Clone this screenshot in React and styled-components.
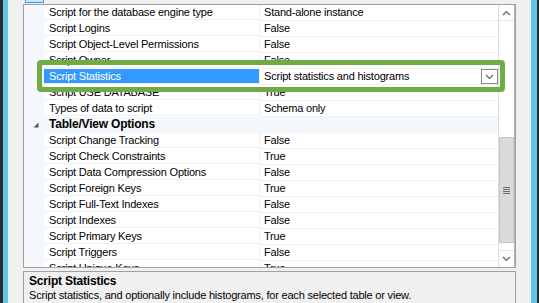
import React from 'react';
import styled, { createGlobalStyle } from 'styled-components';

const GlobalStyle = createGlobalStyle`
  html, body {
    margin: 0;
    padding: 0;
    background: #2b2b2b;
  }
  body {
    width: 539px;
    height: 303px;
    overflow: hidden;
    font-family: "Liberation Sans", Arial, sans-serif;
    font-size: 11px;
    letter-spacing: -0.2px;
    color: #000;
  }
`;

const Screen = styled.div`
  position: relative;
  display: flex;
  width: 539px;
  height: 303px;
  box-sizing: border-box;
  padding: 0 2px 0 3px;
  background: #2b2b2b;
  overflow: hidden;
`;

const Window = styled.div`
  flex: 1;
  min-width: 0;
  display: flex;
  flex-direction: column;
  border-left: 5px solid #5bc6e8;
  border-right: 6px solid #5bc6e8;
  background: #f0f0f0;
  padding: 0 15px;
`;

const Toolbar = styled.div`
  height: 4px;
  flex: none;
  display: flex;
  align-items: flex-end;
  padding-left: 2px;
  overflow: hidden;
`;

const ToolButton = styled.div`
  width: 17px;
  height: 22px;
  flex: none;
  margin-bottom: 1px;
  border: 1px solid #3399ff;
  background: #cce8ff;
`;

const Grid = styled.div`
  height: 264px;
  flex: none;
  box-sizing: border-box;
  border: 1px solid #a0a0a0;
  background: #fff;
  display: flex;
  overflow: hidden;
`;

const Rows = styled.div`
  flex: 1;
  min-width: 0;
  display: flex;
  flex-direction: column;
  overflow: hidden;
`;

const Row = styled.div`
  display: flex;
  height: 16px;
  flex: none;
  background: ${p => (p.$category ? '#f4f7fc' : '#fff')};
`;

const Gutter = styled.div`
  width: 20px;
  flex: none;
  display: flex;
  align-items: center;
  justify-content: center;
  padding-left: 3px;
  box-sizing: border-box;
  background: #f4f7fc;
`;

const NameCell = styled.div`
  width: 216px;
  flex: none;
  height: 15px;
  line-height: 15px;
  padding-left: 5px;
  box-sizing: border-box;
  border-right: 1px solid #f0f0f0;
  border-bottom: 1px solid #f0f0f0;
  background: ${p => (p.$selected ? '#3399ff' : 'transparent')};
  color: ${p => (p.$selected ? '#fff' : '#000')};
  white-space: nowrap;
  overflow: hidden;
`;

const CategoryName = styled.div`
  flex: 1;
  line-height: 15px;
  padding-left: 5px;
  font-weight: bold;
  font-size: 12px;
  white-space: nowrap;
`;

const ValueCell = styled.div`
  flex: 1;
  min-width: 0;
  height: 15px;
  display: flex;
  align-items: center;
  padding-left: 4px;
  border-bottom: 1px solid #f0f0f0;
  white-space: nowrap;
`;

const ValueText = styled.span`
  flex: 1;
  line-height: 15px;
`;

const DropButton = styled.div`
  width: 15px;
  height: 13px;
  flex: none;
  border: 1px solid #8a8a8a;
  background: #fff;
  display: flex;
  align-items: center;
  justify-content: center;
`;

const Scrollbar = styled.div`
  width: 17px;
  flex: none;
  display: flex;
  flex-direction: column;
  box-sizing: border-box;
  border-left: 1px solid #dcdcdc;
  border-right: 1px solid #b4b4b4;
  background: #fff;
`;

const Arrow = styled.div`
  height: ${p => p.$h}px;
  flex: none;
  display: flex;
  align-items: center;
  justify-content: center;
  border-bottom: ${p => (p.$up ? '1px solid #e6e6e6' : 'none')};
  border-top: ${p => (p.$up ? 'none' : '1px solid #e6e6e6')};
  box-sizing: border-box;
`;

const Track = styled.div`
  height: ${p => p.$h}px;
  flex: none;
`;

const Thumb = styled.div`
  height: 106px;
  flex: none;
  box-sizing: border-box;
  border: 1px solid #c8c8c8;
  background: #dadada;
  display: flex;
  align-items: center;
  justify-content: center;
`;

const Gripper = styled.div`
  width: 7px;
  height: 7px;
  background: repeating-linear-gradient(#6d6d6d 0 1px, transparent 1px 2px);
`;

const Description = styled.div`
  margin-top: 3px;
  flex: 1;
  min-height: 0;
  overflow: hidden;
  border: 1px solid #a0a0a0;
  border-bottom: none;
  padding: 2px 5px 0;
`;

const DescTitle = styled.div`
  font-weight: bold;
  font-size: 12px;
  line-height: 14px;
`;

const DescText = styled.div`
  line-height: 14px;
  white-space: nowrap;
`;

const Highlight = styled.div`
  position: absolute;
  left: 37px;
  top: 60px;
  width: 468px;
  height: 32px;
  box-sizing: border-box;
  border: 5px solid #6fac46;
  border-radius: 4px;
  pointer-events: none;
`;

const Chevron = ({ up }) => (
  <svg width="9" height="6" viewBox="0 0 9 6">
    <polyline
      points={up ? '1,5 4.5,1.5 8,5' : '1,1 4.5,4.5 8,1'}
      fill="none"
      stroke="#606060"
      strokeWidth="1.2"
    />
  </svg>
);

const Expander = () => (
  <svg width="6" height="6" viewBox="0 0 6 6">
    <polygon points="5.5,0.5 5.5,5.5 0.5,5.5" fill="#595959" />
  </svg>
);

const rows = [
  { name: 'Script for the database engine type', value: 'Stand-alone instance' },
  { name: 'Script Logins', value: 'False' },
  { name: 'Script Object-Level Permissions', value: 'False' },
  { name: 'Script Owner', value: 'False' },
  { name: 'Script Statistics', value: 'Script statistics and histograms', selected: true },
  { name: 'Script USE DATABASE', value: 'True' },
  { name: 'Types of data to script', value: 'Schema only' },
  { category: 'Table/View Options' },
  { name: 'Script Change Tracking', value: 'False' },
  { name: 'Script Check Constraints', value: 'True' },
  { name: 'Script Data Compression Options', value: 'False' },
  { name: 'Script Foreign Keys', value: 'True' },
  { name: 'Script Full-Text Indexes', value: 'False' },
  { name: 'Script Indexes', value: 'False' },
  { name: 'Script Primary Keys', value: 'True' },
  { name: 'Script Triggers', value: 'False' },
  { name: 'Script Unique Keys', value: 'True' },
];

export default function App() {
  return (
    <Screen>
      <GlobalStyle />
      <Window>
        <Toolbar>
          <ToolButton />
        </Toolbar>
        <Grid>
          <Rows>
            {rows.map((r, i) =>
              r.category ? (
                <Row key={i} $category>
                  <Gutter>
                    <Expander />
                  </Gutter>
                  <CategoryName>{r.category}</CategoryName>
                </Row>
              ) : (
                <Row key={i}>
                  <Gutter />
                  <NameCell $selected={r.selected}>{r.name}</NameCell>
                  <ValueCell>
                    <ValueText>{r.value}</ValueText>
                    {r.selected && (
                      <DropButton>
                        <Chevron />
                      </DropButton>
                    )}
                  </ValueCell>
                </Row>
              )
            )}
          </Rows>
          <Scrollbar>
            <Arrow $up $h={16}>
              <Chevron up />
            </Arrow>
            <Track $h={116} />
            <Thumb>
              <Gripper />
            </Thumb>
            <Track $h={7} />
            <Arrow $h={17}>
              <Chevron />
            </Arrow>
          </Scrollbar>
        </Grid>
        <Description>
          <DescTitle>Script Statistics</DescTitle>
          <DescText>
            Script statistics, and optionally include histograms, for each selected table or view.
          </DescText>
        </Description>
      </Window>
      <Highlight />
    </Screen>
  );
}
